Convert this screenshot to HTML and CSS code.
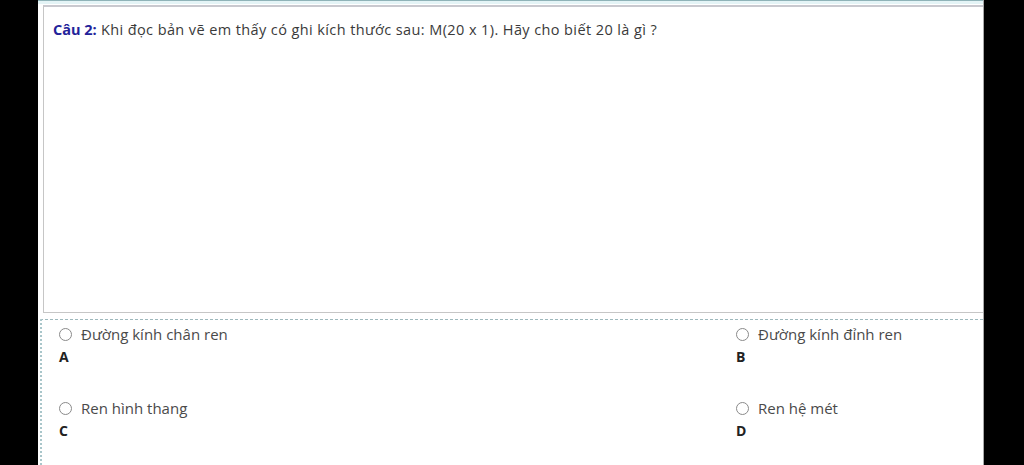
FILE: index.html
```html
<!DOCTYPE html>
<html lang="vi">
<head>
<meta charset="utf-8">
<link rel="stylesheet" href="styles.css">
</head>
<body>
<div class="page">
  <div class="top-strip"></div>
  <div class="question">
    <p class="q-text"><b class="q-num">Câu 2:</b> Khi đọc bản vẽ em thấy có ghi kích thước sau: M(20 x 1). Hãy cho biết 20 là gì ?</p>
  </div>
  <div class="answers">
    <div class="option">
      <div class="opt-line"><span class="radio"></span><span class="opt-text">Đường kính chân ren</span></div>
      <div class="opt-letter">A</div>
    </div>
    <div class="option">
      <div class="opt-line"><span class="radio"></span><span class="opt-text">Đường kính đỉnh ren</span></div>
      <div class="opt-letter">B</div>
    </div>
    <div class="option">
      <div class="opt-line"><span class="radio"></span><span class="opt-text">Ren hình thang</span></div>
      <div class="opt-letter">C</div>
    </div>
    <div class="option">
      <div class="opt-line"><span class="radio"></span><span class="opt-text">Ren hệ mét</span></div>
      <div class="opt-letter">D</div>
    </div>
  </div>
</div>
</body>
</html>
```
FILE: styles.css
```css
html, body {
  margin: 0;
  padding: 0;
  background: #000;
  height: 465px;
  overflow: hidden;
}
.page {
  margin-left: 38px;
  width: 945px;
  height: 465px;
  background: #fff;
  border-right: 1px solid #a9a9a9;
  font-family: "Open Sans", "Noto Sans", sans-serif;
  display: flex;
  flex-direction: column;
  overflow: hidden;
}
.top-strip {
  flex-shrink: 0;
  height: 4px;
  border-top: 1px solid #8fb3b8;
  background: #e4f4f6;
  box-sizing: border-box;
}
.question {
  flex-shrink: 0;
  margin: 1px 0 0 5px;
  height: 308px;
  box-sizing: border-box;
  border: 1px solid #c6c6c6;
  border-top: 2px solid #c9c9cf;
  border-right: none;
  padding: 13px 0 0 9px;
}
.q-text {
  margin: 0;
  font-size: 14.5px;
  line-height: 20px;
  color: #3a3a3a;
  letter-spacing: 0.4px;
}
.q-num {
  color: #23239a;
  font-weight: 700;
  letter-spacing: 0;
}
.answers {
  margin: 6px 0 0 2px;
  flex: 1;
  min-height: 0;
  border-top: 1px dashed #9db8bc;
  border-left: 2px dotted #a9c6ca;
  display: grid;
  grid-template-columns: 677px 1fr;
  grid-auto-rows: 74px;
  align-content: start;
  padding: 4px 0 0 17px;
}
.opt-line {
  display: flex;
  align-items: center;
  height: 20px;
}
.radio {
  width: 11px;
  height: 11px;
  border: 1px solid #8a8a8a;
  border-radius: 50%;
  margin: 0 9px 0 0;
}
.opt-text {
  font-size: 15px;
  color: #4a4a4a;
}
.opt-letter {
  margin-top: 3px;
  font-size: 14px;
  font-weight: 700;
  color: #222;
}
```
